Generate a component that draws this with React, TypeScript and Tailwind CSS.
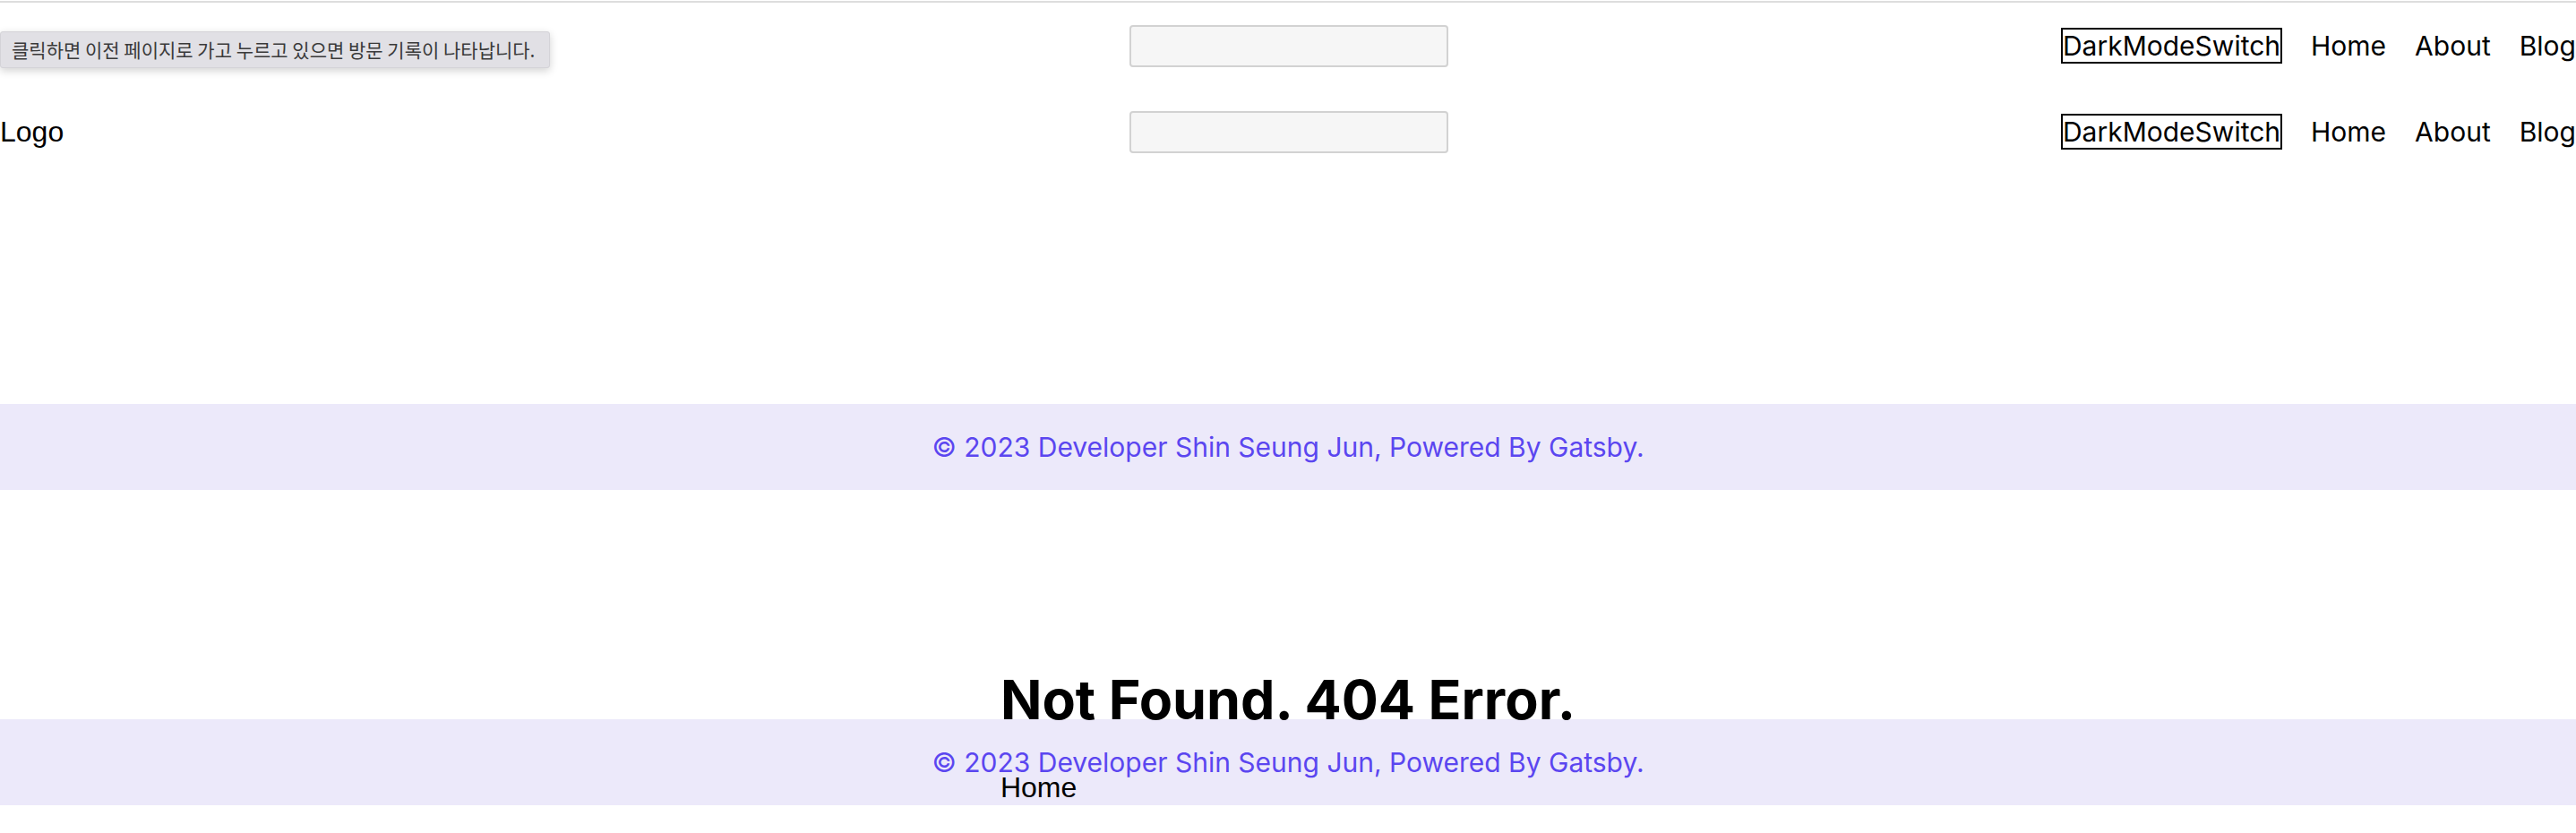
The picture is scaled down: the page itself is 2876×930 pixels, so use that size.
import React from "react";

const sans = "font-['Inter',sans-serif]";
const helv = "font-['Liberation_Sans',Arial,sans-serif]";

const navItems = ["Home", "About", "Blog"];

const Header = () => (
  <header className="grid h-[96px] grid-cols-3 items-center">
    <div className={`${helv} text-[32px] text-black`}>Logo</div>
    <div className="flex justify-center">
      <input className="ml-[2px] h-[47px] w-[356px] rounded-[4px] border-2 border-[#d2d2d2] bg-[#f6f6f6] outline-none" />
    </div>
    <nav className={`${sans} flex items-center justify-end gap-8 whitespace-nowrap text-[30px] text-black`}>
      <button className="border-2 border-black leading-[1.2]">DarkModeSwitch</button>
      {navItems.map((item) => (
        <a key={item} href="#">
          {item}
        </a>
      ))}
    </nav>
  </header>
);

const Footer = () => (
  <footer className={`${sans} flex h-[96px] items-center justify-center bg-[#ece9fa] text-[30px] text-[#5b46f0]`}>
    © 2023 Developer Shin Seung Jun, Powered By Gatsby.
  </footer>
);

export default function App() {
  return (
    <div className="relative w-full overflow-hidden bg-white">
      <div className="mt-[1px] h-[2px] bg-[#dddddd]" />

      {/* back button tooltip */}
      <div className="absolute left-0 top-[35px] z-20 flex h-[41px] w-[614px] items-center rounded-[3px] border border-[#d4d3d8] bg-[#e1e0e5] pl-[12px] font-['Noto_Sans_CJK_KR',sans-serif] text-[21px] text-[#3a3a3a] shadow-[0_3px_10px_rgba(0,0,0,0.18)]">
        클릭하면 이전 페이지로 가고 누르고 있으면 방문 기록이 나타납니다.
      </div>

      <Header />
      <Header />
      <main className="h-[256px]" />
      <Footer />

      <section className="flex h-[256px] items-end justify-center">
        <div className="relative z-10 -mb-[95px] flex flex-col items-start">
          <h1 className={`${sans} text-[61px] font-bold leading-none text-black`}>Not Found. 404 Error.</h1>
          <a href="#" className={`${helv} mt-[49px] text-[32px] leading-[37px] text-black`}>
            Home
          </a>
        </div>
      </section>
      <Footer />
    </div>
  );
}
